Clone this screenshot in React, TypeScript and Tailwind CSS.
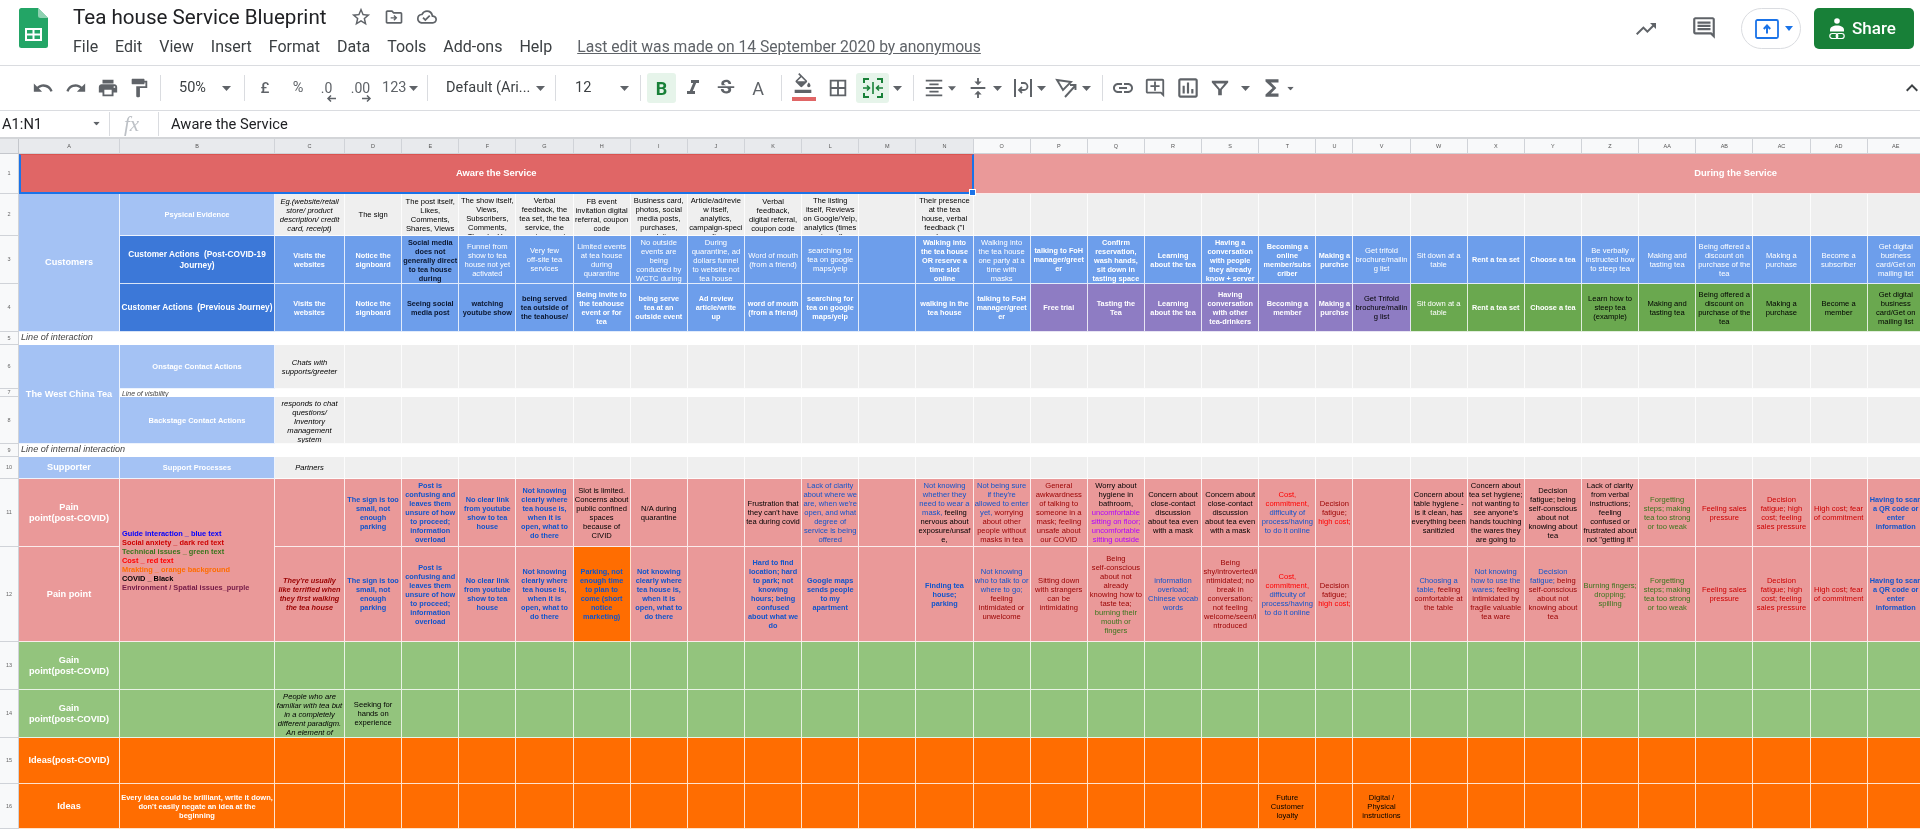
import React from "react";
import {
  MdStarBorder, MdOutlineCloudDone, MdUndo, MdRedo, MdPrint, MdFormatPaint, MdFormatItalic, MdStrikethroughS,
  MdFormatColorFill, MdBorderAll, MdFormatAlignCenter, MdVerticalAlignCenter, MdLink, MdOutlineAddComment,
  MdOutlineInsertChart, MdFunctions, MdTrendingUp, MdOutlineComment, MdExpandLess,
} from "react-icons/md";

type Run = [string, string];
type C = { t?: string | Run[]; c?: string; bg?: string };

const WB = "font-bold text-white";
const WN = "text-white";
const KB = "font-bold text-[#0b1730]";
const K = "text-black";
const KI = "italic text-black";
const BB = "font-bold text-[#1155cc]";
const BN = "text-[#1155cc]";
const DR = "text-[#990000]";
const RR = "text-[#ff0000]";
const CR = "text-[#cc0000]";
const GN = "text-[#38761d]";
const PU = "text-[#b000ff]";

const e: C = {};
const m = (t: string | Run[], c: string, bg?: string): C => ({ t, c, bg });

const PURPLE = "bg-[#8e7cc3]";
const GREEN = "bg-[#6aa84f]";
const ORANGE = "bg-[#ff6d01]";

const row2: C[] = [
  m("Eg.(website/retail\nstore/ product\ndescription/ credit\ncard, receipt)", KI),
  m("The sign", K),
  m("The post itself,\nLikes,\nComments,\nShares, Views", K),
  m("The show itself,\nViews,\nSubscribers,\nComments,\nThumbs Up", K),
  m("Verbal\nfeedback, the\ntea set, the tea\nservice, the\nenvironment", K),
  m("FB event\ninvitation digital\nreferral, coupon\ncode", K),
  m("Business card,\nphotos, social\nmedia posts,\npurchases,\nanalytics", K),
  m("Article/ad/revie\nw itself,\nanalytics,\ncampaign-speci\nfic", K),
  m("Verbal\nfeedback,\ndigital referral,\ncoupon code", K),
  m("The listing\nitself, Reviews\non Google/Yelp,\nanalytics (times\nviewed)", K),
  e,
  m("Their presence\nat the tea\nhouse, verbal\nfeedback (\"I\nhave", K),
];

const row3: C[] = [
  m("Visits the\nwebsites", WB),
  m("Notice the\nsignboard", WB),
  m("Social media\ndoes not\ngenerally direct\nto tea house\nduring", KB),
  m("Funnel from\nshow to tea\nhouse not yet\nactivated", WN),
  m("Very few\noff-site tea\nservices", WN),
  m("Limited events\nat tea house\nduring\nquarantine", WN),
  m("No outside\nevents are\nbeing\nconducted by\nWCTC during", WN),
  m("During\nquarantine, ad\ndollars funnel\nto website not\ntea house", WN),
  m("Word of mouth\n(from a friend)", WN),
  m("searching for\ntea on google\nmaps/yelp", WN),
  e,
  m("Walking into\nthe tea house\nOR reserve a\ntime slot\nonline", WB),
  m("Walking into\nthe tea house\none party at a\ntime with\nmasks", WN),
  m("talking to FoH\nmanager/greet\ner", WB),
  m("Confirm\nreservation,\nwash hands,\nsit down in\ntasting space", WB),
  m("Learning\nabout the tea", WB),
  m("Having a\nconversation\nwith people\nthey already\nknow + server", WB),
  m("Becoming a\nonline\nmember/subs\ncriber", WB),
  m("Making a\npurchse", WB),
  m("Get trifold\nbrochure/mailin\ng list", WN),
  m("Sit down at a\ntable", WN),
  m("Rent a tea set", WB),
  m("Choose a tea", WB),
  m("Be verbally\ninstructed how\nto steep tea", WN),
  m("Making and\ntasting tea", WN),
  m("Being offered a\ndiscount on\npurchase of the\ntea", WN),
  m("Making a\npurchase", WN),
  m("Become a\nsubscriber", WN),
  m("Get digital\nbusiness\ncard/Get on\nmailing list", WN),
];

const row4: C[] = [
  m("Visits the\nwebsites", WB),
  m("Notice the\nsignboard", WB),
  m("Seeing social\nmedia post", KB),
  m("watching\nyoutube show", KB),
  m("being served\ntea outside of\nthe teahouse/", KB),
  m("Being invite to\nthe teahouse\nevent or for\ntea", WB),
  m("being serve\ntea at an\noutside event", WB),
  m("Ad review\narticle/write\nup", WB),
  m("word of mouth\n(from a friend)", WB),
  m("searching for\ntea on google\nmaps/yelp", WB),
  e,
  m("walking in the\ntea house", WB),
  m("talking to FoH\nmanager/greet\ner", WB),
  m("Free trial", WB, PURPLE),
  m("Tasting the\nTea", WB, PURPLE),
  m("Learning\nabout the tea", WB, PURPLE),
  m("Having\nconversation\nwith other\ntea-drinkers", WB, PURPLE),
  m("Becoming a\nmember", WB, PURPLE),
  m("Making a\npurchse", WB, PURPLE),
  m("Get Trifold\nbrochure/mailin\ng list", "text-black", PURPLE),
  m("Sit down at a\ntable", WN, GREEN),
  m("Rent a tea set", WB, GREEN),
  m("Choose a tea", WB, GREEN),
  m("Learn how to\nsteep tea\n(example)", K, GREEN),
  m("Making and\ntasting tea", K, GREEN),
  m("Being offered a\ndiscount on\npurchase of the\ntea", K, GREEN),
  m("Making a\npurchase", K, GREEN),
  m("Become a\nmember", K, GREEN),
  m("Get digital\nbusiness\ncard/Get on\nmailing list", K, GREEN),
];

const costRuns: Run[] = [["Cost,\ncommitment,\n", RR], ["difficulty of\nprocess/having\nto do it online", BN]];
const fatigueRuns: Run[] = [["Decision\nfatigue;\n", DR], ["high cost;", RR]];
const signs = "The sign is too\nsmall, not\nenough\nparking";
const post = "Post is\nconfusing and\nleaves them\nunsure of how\nto proceed;\ninformation\noverload";
const link = "No clear link\nfrom youtube\nshow to tea\nhouse";
const where = "Not knowing\nclearly where\ntea house is,\nwhen it is\nopen, what to\ndo there";
const close = "Concern about\nclose-contact\ndiscussion\nabout tea even\nwith a mask";
const forget = "Forgetting\nsteps; making\ntea too strong\nor too weak";
const sales = "Feeling sales\npressure";
const high = "Decision\nfatigue; high\ncost; feeling\nsales pressure";
const fear = "High cost; fear\nof commitment";
const scan = "Having to scan\na QR code or\nenter\ninformation";

const row11: C[] = [
  e,
  m(signs, BB),
  m(post, BB),
  m(link, BB),
  m(where, BB),
  m("Slot is limited.\nConcerns about\npublic confined\nspaces\nbecause of\nCIVID", K),
  m("N/A during\nquarantine", K),
  e,
  m("Frustration that\nthey can't have\ntea during covid", K),
  m("Lack of clarity\nabout where we\nare, when we're\nopen, and what\ndegree of\nservice is being\noffered", BN),
  e,
  m([["Not knowing\nwhether they\nneed to wear a\nmask,", BN], [" feeling\nnervous about\nexposure/unsaf\ne,", K]], ""),
  m([["Not being sure\nif they're\nallowed to enter\nyet,", BN], [" worrying\nabout other\npeople without\nmasks in tea\nhouse", DR]], ""),
  m("General\nawkwardness\nof talking to\nsomeone in a\nmask; feeling\nunsafe about\nour COVID\nprotocols", DR),
  m([["Worry about\nhygiene in\nbathroom,\n", K], ["uncomfortable\nsitting on floor;\nuncomfortable\nsitting outside", PU]], ""),
  m(close, K),
  m(close, K),
  m(costRuns, ""),
  m(fatigueRuns, ""),
  e,
  m("Concern about\ntable hygiene -\nis it clean, has\neverything been\nsanitizied", K),
  m("Concern about\ntea set hygiene;\nnot wanting to\nsee anyone's\nhands touching\nthe wares they\nare going to", K),
  m("Decision\nfatigue; being\nself-conscious\nabout not\nknowing about\ntea", K),
  m("Lack of clarity\nfrom verbal\ninstructions;\nfeeling\nconfused or\nfrustrated about\nnot \"getting it\"", K),
  m(forget, GN),
  m(sales, CR),
  m(high, CR),
  m(fear, CR),
  m(scan, BB),
];

const row12: C[] = [
  m("They're usually\nlike terrified when\nthey first walking\nthe tea house", "font-bold italic text-[#990000]"),
  m(signs, BB),
  m(post, BB),
  m(link, BB),
  m(where, BB),
  m("Parking, not\nenough time\nto plan to\ncome (short\nnotice\nmarketing)", BB, ORANGE),
  m(where, BB),
  e,
  m("Hard to find\nlocation; hard\nto park; not\nknowing\nhours; being\nconfused\nabout what we\ndo", BB),
  m("Google maps\nsends people\nto my\napartment", BB),
  e,
  m("Finding tea\nhouse;\nparking", BB),
  m([["Not knowing\nwho to talk to or\nwhere to go;\n", BN], ["feeling\nintimidated or\nunwelcome", DR]], ""),
  m("Sitting down\nwith strangers\ncan be\nintimidating", DR),
  m([["Being\nself-conscious\nabout not\nalready\nknowing how to\ntaste tea;\n", DR], ["burning their\nmouth or\nfingers", GN]], ""),
  m("information\noverload;\nChinese vocab\nwords", BN),
  m("Being\nshy/introverted/i\nntimidated; no\nbreak in\nconversation;\nnot feeling\nwelcome/seen/i\nntroduced", DR),
  m(costRuns, ""),
  m(fatigueRuns, ""),
  e,
  m([["Choosing a\ntable,", BN], [" feeling\ncomfortable at\nthe table", DR]], ""),
  m([["Not knowing\nhow to use the\nwares;", BN], [" feeling\nintimidated by\nfragile valuable\ntea ware", DR]], ""),
  m([["Decision\nfatigue;", BN], [" being\nself-conscious\nabout not\nknowing about\ntea", DR]], ""),
  m("Burning fingers;\ndropping;\nspilling", GN),
  m(forget, GN),
  m(sales, CR),
  m(high, CR),
  m(fear, CR),
  m(scan, BB),
];

const row14: C[] = [
  m("People who are\nfamiliar with tea but\nin a completely\ndifferent paradigm.\nAn element of", KI),
  m("Seeking for\nhands on\nexperience", K),
];

const row16: C[] = [
  ...Array<C>(17).fill(e),
  m("Future\nCustomer\nloyalty", K),
  e,
  m("Digital /\nPhysical\ninstructions", K),
];

const COLS = ["A","B","C","D","E","F","G","H","I","J","K","L","M","N","O","P","Q","R","S","T","U","V","W","X","Y","Z","AA","AB","AC","AD","AE"];
const CELL = "flex min-w-0 flex-col [justify-content:safe_center] overflow-hidden border-r border-b border-white/80 py-0.5 text-center leading-[9px]";
const LABEL = "flex min-w-0 items-center justify-center overflow-hidden border-r border-b border-white/80 px-px text-center text-[9.2px] leading-[11px] font-bold text-white";
const SUB = "flex min-w-0 items-center justify-center overflow-hidden border-r border-b border-white/80 px-px text-center text-[7.5px] leading-[9px] font-bold text-white";
const DARK = "flex min-w-0 items-center justify-center overflow-hidden border-r border-b border-white/80 px-px text-center text-[8.3px] leading-[11px] font-bold text-white bg-[#3c78d8]";
const RN = "col-start-1 flex items-center justify-center border-r border-b border-[#d0d3d8] bg-[#f8f9fa] text-[5.5px] text-[#666]";

function RowNum({ n }: { n: number }) {
  return <div className={RN}>{n}</div>;
}

function Cells({ data, bg }: { data: C[]; bg: string }) {
  const filled = [...data, ...Array<C>(Math.max(0, 29 - data.length)).fill(e)];
  return (
    <>
      {filled.map((d, i) => (
        <div key={i} className={`${CELL} ${d.bg ?? bg} ${d.c ?? ""} ${d.c?.includes("font-bold") ? "text-[7.3px]" : "text-[7.6px]"}`}>
          {d.t && (
            <div className="shrink-0 whitespace-pre">
              {typeof d.t === "string" ? d.t : d.t.map((r, j) => <span key={j} className={r[1]}>{r[0]}</span>)}
            </div>
          )}
        </div>
      ))}
    </>
  );
}

function Caret({ className = "" }: { className?: string }) {
  return (
    <svg width="9" height="5" viewBox="0 0 9 5" className={className}>
      <path d="M0 0h9L4.5 5z" fill="#5f6368" />
    </svg>
  );
}

function Sep({ className = "" }: { className?: string }) {
  return <div className={`h-[26px] w-px shrink-0 bg-[#dadce0] ${className}`} />;
}

function Ico({ className = "", children }: { className?: string; children: React.ReactNode }) {
  return <div className={`flex h-full shrink-0 items-center justify-center ${className}`}>{children}</div>;
}

function Logo() {
  return (
    <svg width="29" height="40" viewBox="0 0 29 40" className="shrink-0">
      <path d="M2.5 0H19l10 10v27.5a2.5 2.5 0 0 1-2.5 2.5h-24A2.5 2.5 0 0 1 0 37.5v-35A2.5 2.5 0 0 1 2.5 0z" fill="#23a566" />
      <path d="M19 0l10 10h-7.5A2.5 2.5 0 0 1 19 7.5z" fill="#8ed1b1" />
      <path d="M6 20h17v13H6zm2 2v3.5h5.5V22zm7.5 0v3.5H21V22zM8 27.5V31h5.5v-3.5zm7.5 0V31H21v-3.5z" fill="#fff" fillRule="evenodd" />
    </svg>
  );
}

function FolderMove() {
  return (
    <svg width="20" height="20" viewBox="0 0 24 24" fill="#5f6368">
      <path d="M20 6h-8l-2-2H4c-1.1 0-2 .9-2 2v12c0 1.1.9 2 2 2h16c1.1 0 2-.9 2-2V8c0-1.1-.9-2-2-2zm0 12H4V6h5.17l2 2H20v10z" />
      <path d="M12.5 9.5l-1.2 1.2 1.5 1.5H8v1.6h4.8l-1.5 1.5 1.2 1.2 3.5-3.5z" />
    </svg>
  );
}

function Merge() {
  return (
    <svg width="22" height="22" viewBox="0 0 22 22" fill="none" stroke="#188038" strokeWidth="2">
      <path d="M2 6V2h5M15 2h5v4M2 16v4h5M15 20h5v-4" />
      <path d="M1 11h6M5 8.5L7.5 11 5 13.5M21 11h-6M17 8.5L14.5 11l2.5 2.5M11 5v12" strokeWidth="1.6" />
    </svg>
  );
}

function WrapIcon() {
  return (
    <svg width="22" height="22" viewBox="0 0 22 22" fill="none" stroke="#5f6368" strokeWidth="2">
      <path d="M3 2v18M19 2v18" />
      <path d="M9 6h3a3.5 3.5 0 0 1 0 7H7.5M10 10l-3 3 3 3" strokeWidth="1.8" />
    </svg>
  );
}

function RotateIcon() {
  return (
    <svg width="24" height="22" viewBox="0 0 24 22" fill="none" stroke="#5f6368" strokeWidth="1.9">
      <path d="M2 3l14 2-8 8zM10 20l10-11M15 8h5.5v5" />
    </svg>
  );
}

function FilterIcon() {
  return (
    <svg width="20" height="20" viewBox="0 0 22 22">
      <path d="M2 3h18v2l-7 8v6H9v-6L2 5z" fill="#5f6368" />
      <path d="M6 6h10l-5 6z" fill="#fff" />
    </svg>
  );
}

function ShareIcon() {
  return (
    <svg width="16" height="22" viewBox="0 0 16 22" fill="none" stroke="#fff">
      <circle cx="8" cy="3" r="2.8" fill="#fff" stroke="none" />
      <path d="M1 12c0-3 3-4.5 7-4.5s7 1.5 7 4.5v1.500H1z" fill="#fff" stroke="none" />
      <rect x="0.8" y="15.5" width="8" height="5" rx="2.5" strokeWidth="1.2" />
      <rect x="7.2" y="15.5" width="8" height="5" rx="2.5" strokeWidth="1.2" />
    </svg>
  );
}

function UploadBox() {
  return (
    <svg width="24" height="20" viewBox="0 0 24 20" fill="none">
      <rect x="1" y="1" width="22" height="18" rx="1.5" stroke="#1a73e8" strokeWidth="1.8" />
      <path d="M12 14.5V7M8.8 10L12 6.5 15.2 10" stroke="#1a73e8" strokeWidth="2" />
    </svg>
  );
}

const MENU = ["File", "Edit", "View", "Insert", "Format", "Data", "Tools", "Add-ons", "Help"];

function TopBar() {
  return (
    <div className="flex h-[66px] items-start border-b border-[#dadce0] pl-[19px]">
      <div className="mt-2">
        <Logo />
      </div>
      <div className="ml-[25px] flex flex-col">
        <div className="flex h-[34px] items-center">
          <div className="w-[270px] text-[20.6px] leading-[28px] whitespace-nowrap text-[#202124]">Tea house Service Blueprint</div>
          <MdStarBorder size={22} className="ml-[7px] text-[#5f6368]" />
          <div className="ml-[12px]"><FolderMove /></div>
          <MdOutlineCloudDone size={20} className="ml-[13px] text-[#5f6368]" />
        </div>
        <div className="mt-px flex items-center gap-[17px] text-[16px] leading-[24px] text-[#3c4043]">
          {MENU.map((x) => <span key={x}>{x}</span>)}
          <span className="ml-2 text-[15.7px] text-[#5f6368] underline">Last edit was made on 14 September 2020 by anonymous</span>
        </div>
      </div>
      <div className="ml-auto flex h-full items-start">
        <MdTrendingUp size={24} className="mt-[17px] text-[#5f6368]" />
        <MdOutlineComment size={26} className="mt-[15px] ml-[33px] text-[#5f6368]" />
        <div className="mt-2 ml-[24px] flex h-[41px] w-[60px] items-center rounded-full border border-[#dadce0] pl-[13px]">
          <UploadBox />
          <svg width="8" height="5" viewBox="0 0 8 5" className="ml-[6px]"><path d="M0 0h8L4 5z" fill="#1a73e8" /></svg>
        </div>
        <div className="mt-2 ml-[13px] mr-[6px] flex h-[41px] w-[100px] items-center rounded-[5px] bg-[#188038] pl-[15px]">
          <ShareIcon />
          <span className="ml-[7px] text-[17px] font-medium text-white">Share</span>
        </div>
      </div>
    </div>
  );
}

function Toolbar() {
  const I = 22;
  const c = "text-[#5f6368]";
  return (
    <div className="flex h-[45px] items-center border-b border-[#dadce0] pl-[26px] text-[#5f6368]">
      <Ico className="w-[33px]"><MdUndo size={I} className={c} /></Ico>
      <Ico className="w-[33px]"><MdRedo size={I} className={c} /></Ico>
      <Ico className="w-[31px]"><MdPrint size={I} className={c} /></Ico>
      <Ico className="w-[32px]"><MdFormatPaint size={I} className={c} /></Ico>
      <Sep className="ml-[5px]" />
      <div className="flex h-full w-[83px] shrink-0 items-center pl-[18px] text-[14.5px] text-[#3c4043]">50%<Caret className="ml-[16px]" /></div>
      <Sep />
      <Ico className="w-[40px] text-[15px] font-medium">£</Ico>
      <Ico className="w-[26px] text-[14.5px]">%</Ico>
      <Ico className="w-[31px]">
        <div className="relative text-[14px] leading-none">.0
          <svg width="10" height="7" viewBox="0 0 10 7" className="absolute top-[14px] left-[5px]"><path d="M10 3.5H3M5 .5L2 3.5l3 3" fill="none" stroke="#5f6368" strokeWidth="1.5" /></svg>
        </div>
      </Ico>
      <Ico className="w-[37px]">
        <div className="relative text-[14px] leading-none">.00
          <svg width="10" height="7" viewBox="0 0 10 7" className="absolute top-[14px] left-[11px]"><path d="M0 3.5h7M5 .5l3 3-3 3" fill="none" stroke="#5f6368" strokeWidth="1.5" /></svg>
        </div>
      </Ico>
      <div className="flex h-full w-[48px] shrink-0 items-center pl-[3px] text-[14.5px]">123<Caret className="ml-[3px]" /></div>
      <Sep />
      <div className="flex h-full w-[127px] shrink-0 items-center pl-[18px] text-[14.5px] text-[#3c4043]">Default (Ari...<Caret className="ml-auto mr-[10px]" /></div>
      <Sep />
      <div className="flex h-full w-[84px] shrink-0 items-center pl-[19px] text-[14.5px] text-[#3c4043]">12<Caret className="ml-[29px]" /></div>
      <Sep />
      <div className="ml-[6px] flex h-[30px] w-[29px] shrink-0 items-center justify-center rounded-[3px] bg-[#e6f4ea] text-[18px] font-bold text-[#188038]">B</div>
      <Ico className="w-[34px]"><MdFormatItalic size={24} className={c} /></Ico>
      <Ico className="w-[32px]"><MdStrikethroughS size={I} className={c} /></Ico>
      <Ico className="w-[32px] text-[18px] text-[#5f6368]">A</Ico>
      <Sep className="ml-[7px]" />
      <Ico className="relative w-[42px]">
        <MdFormatColorFill size={20} className="mb-[10px] text-[#5f6368]" />
        <div className="absolute top-[31px] left-[10px] h-1 w-[24px] bg-[#e06666]" />
      </Ico>
      <Ico className="w-[28px]"><MdBorderAll size={I} className={c} /></Ico>
      <div className="ml-[4px] flex h-[30px] w-[33px] shrink-0 items-center justify-center rounded-[3px] bg-[#e6f4ea]"><Merge /></div>
      <Ico className="w-[16px]"><Caret /></Ico>
      <Sep className="ml-[8px]" />
      <Ico className="ml-[6px] w-[28px]"><MdFormatAlignCenter size={I} className={c} /></Ico>
      <Ico className="w-[8px]"><Caret /></Ico>
      <Ico className="ml-[8px] w-[28px]"><MdVerticalAlignCenter size={I} className={c} /></Ico>
      <Ico className="w-[11px]"><Caret /></Ico>
      <Ico className="ml-[6px] w-[28px]"><WrapIcon /></Ico>
      <Ico className="w-[9px]"><Caret /></Ico>
      <Ico className="ml-[7px] w-[28px]"><RotateIcon /></Ico>
      <Ico className="w-[10px]"><Caret /></Ico>
      <Sep className="ml-[11px]" />
      <Ico className="w-[40px]"><MdLink size={24} className={c} /></Ico>
      <Ico className="w-[24px]"><MdOutlineAddComment size={I} className={c} /></Ico>
      <Ico className="w-[42px]"><MdOutlineInsertChart size={26} className={c} /></Ico>
      <Ico className="w-[22px]"><FilterIcon /></Ico>
      <Ico className="w-[28px]"><Caret /></Ico>
      <Ico className="w-[26px]"><MdFunctions size={26} className={c} /></Ico>
      <Ico className="w-[10px]"><Caret className="scale-75" /></Ico>
      <MdExpandLess size={24} className="ml-auto -mr-[4px] text-[#3c4043]" />
    </div>
  );
}

function FormulaBar() {
  return (
    <div className="flex h-[28px] items-center border-b-2 border-[#d3d5d8] text-[14.7px] text-[#202124]">
      <div className="w-[109px] shrink-0 pl-[2px]">
        <div className="flex items-center">A1:N1<Caret className="ml-auto mr-[8px] scale-75" /></div>
      </div>
      <div className="h-[24px] w-px bg-[#dadce0]" />
      <div className="w-[48px] pl-[14px] [font-family:'Liberation_Serif',serif] text-[21px] italic leading-none text-[#bdc1c6]">fx</div>
      <div className="h-[24px] w-px bg-[#dadce0]" />
      <div className="ml-[12px]">Aware the Service</div>
    </div>
  );
}

function Sheet() {
  return (
    <div className="grid grid-cols-[19px_101px_155px_70px_repeat(17,57.15px)_37px_repeat(10,57.15px)_573px] grid-rows-[15px_40px_42px_48px_48px_13px_44px_8px_47px_13px_22px_68px_95px_48px_48px_46px_45px] [font-family:'Liberation_Sans',sans-serif]">
      <div className="border-r border-b border-[#c4c7cc] bg-[#e8eaed]" />
      {COLS.map((c, i) => (
        <div
          key={c}
          className={`flex items-center justify-center border-r border-b border-[#d0d3d8] text-[5.5px] text-[#555] ${i < 14 ? "bg-[#e8eaed]" : "bg-[#f8f9fa]"}`}
        >
          {c}
        </div>
      ))}

      <RowNum n={1} />
      <div className="relative col-span-14 flex items-center justify-center border-x-2 border-t border-b-2 border-x-[#1a73e8] border-t-[#d9534f] border-b-[#1a73e8] bg-[#e06666] text-[9.4px] font-bold text-white">
        Aware the Service
        <div className="absolute -right-[4px] -bottom-[4px] z-10 size-[7px] border border-white bg-[#1a73e8]" />
      </div>
      <div className="col-span-18 flex items-center justify-center border-b border-white/80 bg-[#ea9999] text-[9.4px] font-bold text-white">During the Service</div>

      <RowNum n={2} />
      <div className={`${LABEL} row-span-3 bg-[#a4c2f4]`}>Customers</div>
      <div className={`${SUB} bg-[#a4c2f4]`}>Psysical Evidence</div>
      <Cells data={row2} bg="bg-[#efefef]" />

      <RowNum n={3} />
      <div className={DARK}>Customer Actions &nbsp;(Post-COVID-19 Journey)</div>
      <Cells data={row3} bg="bg-[#6d9eeb]" />

      <RowNum n={4} />
      <div className={DARK}>Customer Actions &nbsp;(Previous Journey)</div>
      <Cells data={row4} bg="bg-[#6d9eeb]" />

      <RowNum n={5} />
      <div className="col-span-31 flex items-center border-b border-white pl-[2px] text-[9.1px] italic text-[#444]">Line of interaction</div>

      <RowNum n={6} />
      <div className={`${LABEL} row-span-3 bg-[#a4c2f4]`}>The West China Tea</div>
      <div className={`${SUB} bg-[#a4c2f4]`}>Onstage Contact Actions</div>
      <Cells data={[m("Chats with\nsupports/greeter", KI)]} bg="bg-[#efefef]" />

      <RowNum n={7} />
      <div className="col-span-30 overflow-hidden pl-[2px] text-[6.9px] leading-[10px] italic text-[#444]">Line of visibility</div>

      <RowNum n={8} />
      <div className={`${SUB} bg-[#a4c2f4]`}>Backstage Contact Actions</div>
      <Cells data={[m("responds to chat\nquestions/\nInventory\nmanagement\nsystem", KI)]} bg="bg-[#efefef]" />

      <RowNum n={9} />
      <div className="col-span-31 flex items-center border-b border-white pl-[2px] text-[9.1px] italic text-[#444]">Line of internal interaction</div>

      <RowNum n={10} />
      <div className={`${LABEL} bg-[#a4c2f4]`}>Supporter</div>
      <div className={`${SUB} bg-[#a4c2f4]`}>Support Processes</div>
      <Cells data={[m("Partners", KI)]} bg="bg-[#efefef]" />

      <RowNum n={11} />
      <div className={`${LABEL} bg-[#ea9999]`}><span>Pain<br />point(post-COVID)</span></div>
      <div className="row-span-2 flex flex-col justify-center border-r border-b border-white/80 bg-[#ea9999] pl-[2px] text-[7.4px] leading-[9px] font-bold">
        <div className="text-[#0000ff]">Guide interaction _ blue text</div>
        <div className="text-[#cc0000]">Social anxiety _ dark red text</div>
        <div className="text-[#38761d]">Technical issues _ green text</div>
        <div className="text-[#ff0000]">Cost _ red text</div>
        <div className="text-[#ff6d01]">Mrakting _ orange background</div>
        <div className="text-black">COVID _ Black</div>
        <div className="text-[#741b47]">Environment / Spatial issues_purple</div>
      </div>
      <Cells data={row11} bg="bg-[#ea9999]" />

      <RowNum n={12} />
      <div className={`${LABEL} bg-[#ea9999]`}>Pain point</div>
      <Cells data={row12} bg="bg-[#ea9999]" />

      <RowNum n={13} />
      <div className={`${LABEL} bg-[#93c47d]`}><span>Gain<br />point(post-COVID)</span></div>
      <div className={`${SUB} bg-[#93c47d]`} />
      <Cells data={[]} bg="bg-[#93c47d]" />

      <RowNum n={14} />
      <div className={`${LABEL} bg-[#93c47d]`}><span>Gain<br />point(post-COVID)</span></div>
      <div className={`${SUB} bg-[#93c47d]`} />
      <Cells data={row14} bg="bg-[#93c47d]" />

      <RowNum n={15} />
      <div className={`${LABEL} bg-[#ff6d01]`}>Ideas(post-COVID)</div>
      <div className={`${SUB} bg-[#ff6d01]`} />
      <Cells data={[]} bg="bg-[#ff6d01]" />

      <RowNum n={16} />
      <div className={`${LABEL} bg-[#ff6d01]`}>Ideas</div>
      <div className={`${SUB} bg-[#ff6d01]`}><span>Every idea could be brilliant, write it down,<br />don't easily negate an idea at the<br />beginning</span></div>
      <Cells data={row16} bg="bg-[#ff6d01]" />
    </div>
  );
}

export default function App() {
  return (
    <div className="h-[830px] w-[1920px] overflow-hidden bg-white blur-[0.35px] [font-family:Roboto,sans-serif]">
      <TopBar />
      <Toolbar />
      <FormulaBar />
      <Sheet />
    </div>
  );
}
